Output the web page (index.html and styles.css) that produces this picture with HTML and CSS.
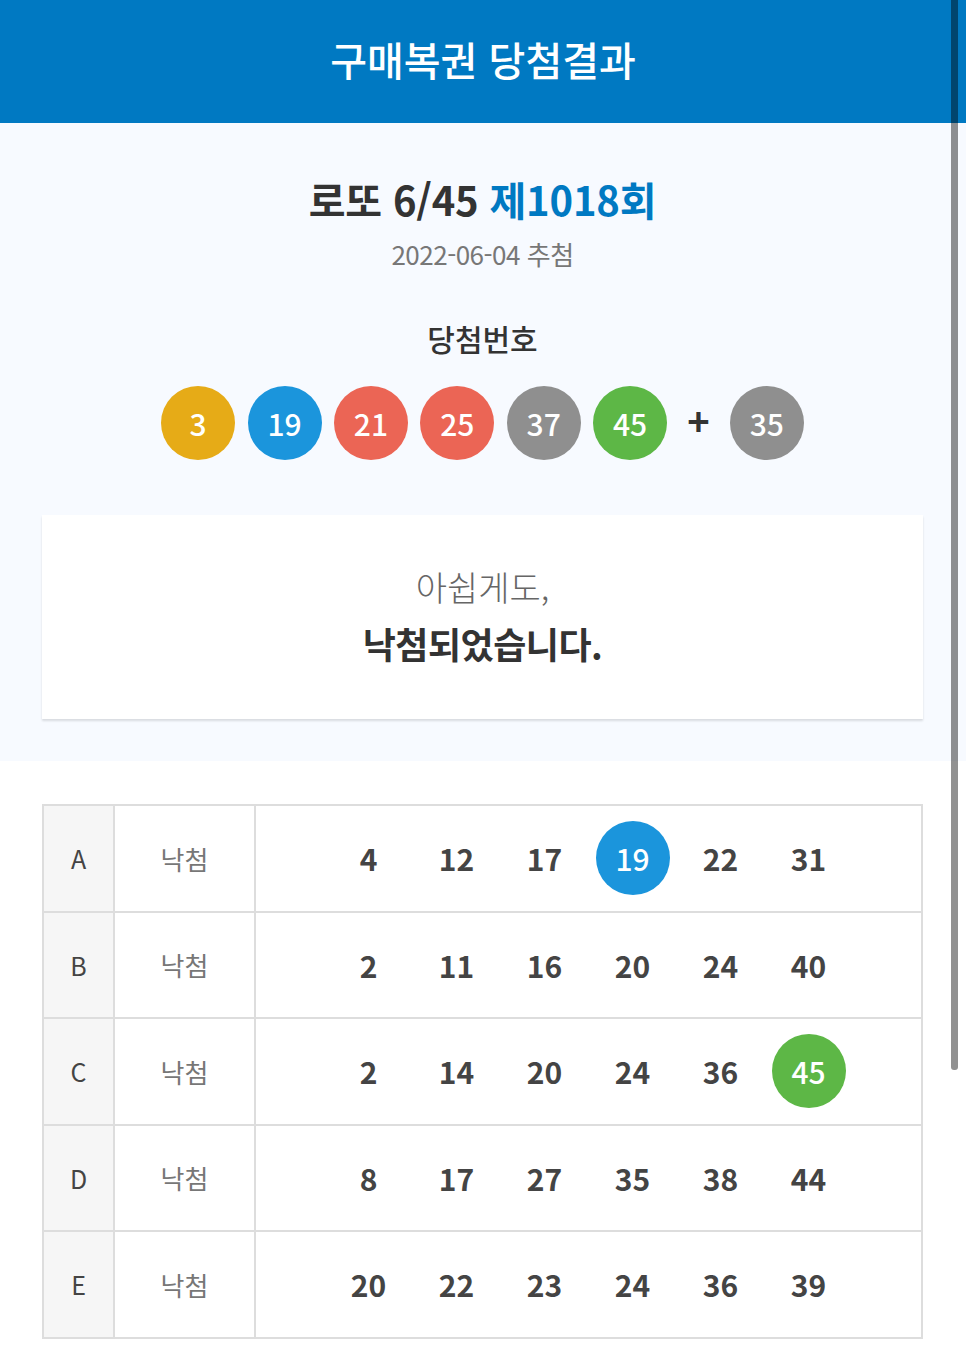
FILE: index.html
```html
<!DOCTYPE html>
<html lang="ko">
<head>
<meta charset="utf-8">
<title>구매복권 당첨결과</title>
<link rel="stylesheet" href="styles.css">
</head>
<body>
<header class="topbar">
  <h1 class="topbar-title">구매복권 당첨결과</h1>
</header>

<section class="summary">
  <h2 class="round-title">로또 6/45 <span class="round-no">제1018회</span></h2>
  <p class="draw-date">2022-06-04 추첨</p>
  <h3 class="win-label">당첨번호</h3>
  <div class="balls">
    <span class="ball ball-yellow">3</span>
    <span class="ball ball-blue">19</span>
    <span class="ball ball-red">21</span>
    <span class="ball ball-red">25</span>
    <span class="ball ball-gray">37</span>
    <span class="ball ball-green">45</span>
    <span class="plus">+</span>
    <span class="ball ball-gray">35</span>
  </div>
  <div class="result-card">
    <p class="result-sub">아쉽게도,</p>
    <p class="result-main">낙첨되었습니다.</p>
  </div>
</section>

<section class="tickets">
  <table class="ticket-table">
    <colgroup>
      <col class="col-game">
      <col class="col-status">
      <col class="col-nums">
    </colgroup>
    <tbody>
      <tr>
        <td class="game">A</td>
        <td class="status">낙첨</td>
        <td class="nums"><div class="num-row"><span class="num">4</span><span class="num">12</span><span class="num">17</span><span class="num hit ball-blue">19</span><span class="num">22</span><span class="num">31</span></div></td>
      </tr>
      <tr>
        <td class="game">B</td>
        <td class="status">낙첨</td>
        <td class="nums"><div class="num-row"><span class="num">2</span><span class="num">11</span><span class="num">16</span><span class="num">20</span><span class="num">24</span><span class="num">40</span></div></td>
      </tr>
      <tr>
        <td class="game">C</td>
        <td class="status">낙첨</td>
        <td class="nums"><div class="num-row"><span class="num">2</span><span class="num">14</span><span class="num">20</span><span class="num">24</span><span class="num">36</span><span class="num hit ball-green">45</span></div></td>
      </tr>
      <tr>
        <td class="game">D</td>
        <td class="status">낙첨</td>
        <td class="nums"><div class="num-row"><span class="num">8</span><span class="num">17</span><span class="num">27</span><span class="num">35</span><span class="num">38</span><span class="num">44</span></div></td>
      </tr>
      <tr>
        <td class="game">E</td>
        <td class="status">낙첨</td>
        <td class="nums"><div class="num-row"><span class="num">20</span><span class="num">22</span><span class="num">23</span><span class="num">24</span><span class="num">36</span><span class="num">39</span></div></td>
      </tr>
    </tbody>
  </table>
</section>

<div class="scroll-thumb"></div>
</body>
</html>
```

FILE: styles.css
```css
* {
  box-sizing: border-box;
}

html, body {
  margin: 0;
  padding: 0;
  background: #ffffff;
  font-family: "Noto Sans CJK KR", "Noto Sans", sans-serif;
  color: #333333;
  overflow: hidden;
}

.topbar {
  height: 123px;
  background: #0079c2;
  display: flex;
  align-items: center;
  justify-content: center;
}

.topbar-title {
  margin: 0 0 6px 0;
  font-size: 40px;
  font-weight: 500;
  color: #ffffff;
  line-height: 1.2;
  letter-spacing: 0;
}

.summary {
  background: #f7faff;
  padding: 52px 43px 42px 42px;
  display: flex;
  flex-direction: column;
  align-items: center;
}

.round-title {
  margin: 0;
  font-size: 40px;
  font-weight: 700;
  line-height: 48px;
  color: #333333;
  letter-spacing: -0.2px;
}

.round-no {
  color: #0079c2;
}

.draw-date {
  margin: 15px 0 0 0;
  font-size: 26px;
  line-height: 32px;
  color: #777777;
  letter-spacing: -0.5px;
}

.win-label {
  margin: 50px 0 0 0;
  font-size: 30px;
  line-height: 36px;
  font-weight: 500;
  color: #333333;
}

.balls {
  margin-top: 30px;
  display: flex;
  align-items: center;
  gap: 12.4px;
}

.ball {
  width: 74px;
  height: 74px;
  border-radius: 50%;
  display: flex;
  align-items: center;
  justify-content: center;
  font-size: 30px;
  font-weight: 500;
  color: #ffffff;
  line-height: 1;
}

.ball-yellow { background: #e6ab17; }
.ball-blue { background: #1b95dc; }
.ball-red { background: #eb6555; }
.ball-gray { background: #8f8f8f; }
.ball-green { background: #5db746; }

.plus {
  width: 38px;
  text-align: center;
  font-size: 38px;
  font-weight: 700;
  color: #333333;
  line-height: 1;
  margin-top: -6px;
}

.result-card {
  align-self: stretch;
  margin-top: 55px;
  background: #ffffff;
  box-shadow: 0 2px 2px rgba(0, 0, 0, 0.12);
  padding: 50px 20px 52px;
  text-align: center;
}

.result-sub {
  margin: 0;
  font-size: 34px;
  line-height: 44px;
  font-weight: 300;
  color: #666666;
}

.result-main {
  margin: 10px 0 0 0;
  font-size: 36px;
  line-height: 48px;
  font-weight: 700;
  color: #333333;
  letter-spacing: -0.5px;
}

.tickets {
  padding: 43px 43px 0 42px;
}

.ticket-table {
  width: 100%;
  border-collapse: collapse;
  table-layout: fixed;
}

.col-game { width: 71px; }
.col-status { width: 141px; }

.ticket-table td {
  border: 2px solid #dddddd;
  height: 106.5px;
  padding: 0;
  text-align: center;
  vertical-align: middle;
}

.game {
  background: #f6f6f6;
  font-size: 25px;
  color: #444444;
}

.status {
  font-size: 26px;
  color: #777777;
}

.num-row {
  display: flex;
  justify-content: center;
  align-items: center;
}

.num {
  width: 88px;
  height: 74px;
  display: flex;
  align-items: center;
  justify-content: center;
  font-size: 30px;
  font-weight: 700;
  color: #444444;
  line-height: 1;
}

.num.hit {
  width: 74px;
  margin: 0 7px;
  border-radius: 50%;
  color: #ffffff;
  font-weight: 500;
}

.scroll-thumb {
  position: fixed;
  top: 0;
  right: 8px;
  width: 7px;
  height: 1070px;
  background: rgba(0, 0, 0, 0.43);
  border-radius: 0 0 3px 3px;
}
```
